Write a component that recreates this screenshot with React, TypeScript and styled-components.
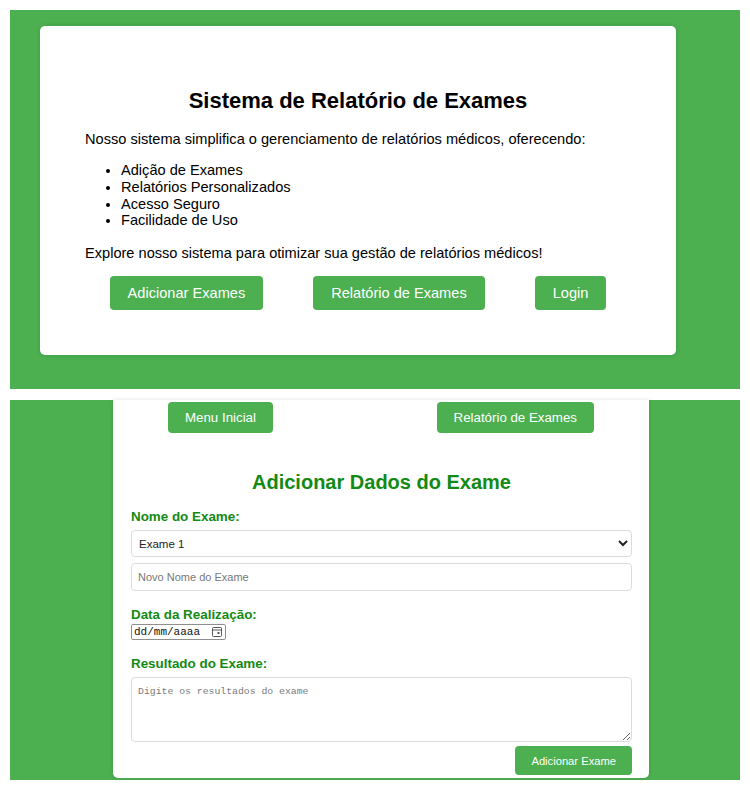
import React from "react";
import styled, { createGlobalStyle } from "styled-components";

const Global = createGlobalStyle`
  html, body { margin: 0; padding: 0; background: #ffffff; }
  body { font-family: "Liberation Sans", Arial, sans-serif; color: #000; }
  * { box-sizing: border-box; }
`;

const Page = styled.div`
  padding: 10px;
  display: flex;
  flex-direction: column;
  gap: 11px;
`;

const GreenSection = styled.section<{ $pad: string }>`
  background: #4caf50;
  padding: ${(p) => p.$pad};
`;

const HomeCard = styled.div`
  background: #ffffff;
  border-radius: 5px;
  box-shadow: 0 0 4px rgba(0, 0, 0, 0.12);
  padding: 62px 45px 45px;
`;

const Title = styled.h1`
  margin: 0 0 17px;
  font-size: 22px;
  font-weight: bold;
  text-align: center;
  line-height: 25px;
`;

const Para = styled.p<{ $mb: number }>`
  margin: 0 0 ${(p) => p.$mb}px;
  font-size: 14.6px;
  line-height: 18px;
`;

const List = styled.ul`
  margin: 0 0 15px;
  padding-left: 36px;
  font-size: 14.6px;
  line-height: 16.75px;
`;

const HomeButtons = styled.div`
  display: flex;
  justify-content: center;
  gap: 50px;
`;

const GreenButton = styled.button<{ $size: number; $pad: string; $h: number }>`
  background: #4caf50;
  color: #ffffff;
  border: none;
  border-radius: 4px;
  font-family: "Liberation Sans", Arial, sans-serif;
  font-size: ${(p) => p.$size}px;
  height: ${(p) => p.$h}px;
  padding: ${(p) => p.$pad};
  cursor: pointer;
  line-height: normal;
`;

const FormCard = styled.div`
  background: #ffffff;
  border-radius: 0 0 5px 5px;
  box-shadow: 0 0 4px rgba(0, 0, 0, 0.12);
  padding: 2px 17px 3px 18px;
`;

const Nav = styled.nav`
  display: flex;
  justify-content: space-between;
  padding: 0 38px 0 37px;
`;

const FormTitle = styled.h2`
  margin: 37px 0 15px;
  font-size: 20px;
  line-height: 24px;
  color: #138a13;
  text-align: center;
`;

const Label = styled.label<{ $mt: number }>`
  display: block;
  margin-top: ${(p) => p.$mt}px;
  font-size: 13.4px;
  line-height: 16px;
  font-weight: bold;
  color: #138a13;
`;

const Select = styled.select`
  display: block;
  width: 100%;
  height: 27px;
  margin-top: 5px;
  padding: 0 3px;
  border: 1px solid #dcdcdc;
  border-radius: 4px;
  background: #ffffff;
  font-family: "Liberation Sans", Arial, sans-serif;
  font-size: 11.5px;
  color: #222;
`;

const TextInput = styled.input`
  display: block;
  width: 100%;
  height: 28px;
  margin-top: 6px;
  padding: 0 6px;
  border: 1px solid #dcdcdc;
  border-radius: 4px;
  font-family: "Liberation Sans", Arial, sans-serif;
  font-size: 11px;
  &::placeholder { color: #777; }
`;

const DateBox = styled.div`
  display: flex;
  width: fit-content;
  align-items: center;
  gap: 12px;
  margin-top: 1px;
  height: 16px;
  padding: 0 3px 0 2px;
  border: 1px solid #8f8f8f;
  border-radius: 2px;
  font-family: "Liberation Mono", "DejaVu Sans Mono", monospace;
  font-size: 11px;
  color: #111;
`;

const TextArea = styled.textarea`
  display: block;
  width: 100%;
  height: 65px;
  margin-top: 5px;
  padding: 8px 6px;
  border: 1px solid #dcdcdc;
  border-radius: 4px;
  font-family: "Liberation Mono", "DejaVu Sans Mono", monospace;
  font-size: 9.8px;
  &::placeholder { color: #7a7a7a; }
`;

const SubmitRow = styled.div`
  display: flex;
  justify-content: flex-end;
  margin-top: 4px;
`;

const CalendarIcon = () => (
  <svg width="10" height="10" viewBox="0 0 10 10" fill="none">
    <rect x="0.5" y="0.5" width="9" height="9" rx="1" stroke="#555" />
    <line x1="0.5" y1="3" x2="9.5" y2="3" stroke="#555" />
    <rect x="5.5" y="5" width="2" height="2" fill="#555" />
  </svg>
);

export default function App() {
  return (
    <>
      <Global />
      <Page>
        <GreenSection $pad="16px 64px 34px 30px">
          <HomeCard>
            <Title>Sistema de Relatório de Exames</Title>
            <Para $mb={14}>
              Nosso sistema simplifica o gerenciamento de relatórios médicos, oferecendo:
            </Para>
            <List>
              <li>Adição de Exames</li>
              <li>Relatórios Personalizados</li>
              <li>Acesso Seguro</li>
              <li>Facilidade de Uso</li>
            </List>
            <Para $mb={14}>
              Explore nosso sistema para otimizar sua gestão de relatórios médicos!
            </Para>
            <HomeButtons>
              <GreenButton $size={14.6} $h={34} $pad="0 18px">Adicionar Exames</GreenButton>
              <GreenButton $size={14.6} $h={34} $pad="0 18px">Relatório de Exames</GreenButton>
              <GreenButton $size={14.6} $h={34} $pad="0 18px">Login</GreenButton>
            </HomeButtons>
          </HomeCard>
        </GreenSection>
        <GreenSection $pad="0 91px 2px 103px">
          <FormCard>
            <Nav>
              <GreenButton $size={13.3} $h={31} $pad="0 17px">Menu Inicial</GreenButton>
              <GreenButton $size={13.3} $h={31} $pad="0 17px">Relatório de Exames</GreenButton>
            </Nav>
            <FormTitle>Adicionar Dados do Exame</FormTitle>
            <Label $mt={0}>Nome do Exame:</Label>
            <Select defaultValue="Exame 1">
              <option>Exame 1</option>
              <option>Exame 2</option>
            </Select>
            <TextInput placeholder="Novo Nome do Exame" />
            <Label $mt={16}>Data da Realização:</Label>
            <DateBox>
              <span>dd/mm/aaaa</span>
              <CalendarIcon />
            </DateBox>
            <Label $mt={16}>Resultado do Exame:</Label>
            <TextArea placeholder="Digite os resultados do exame" />
            <SubmitRow>
              <GreenButton $size={11.2} $h={29} $pad="0 16px">Adicionar Exame</GreenButton>
            </SubmitRow>
          </FormCard>
        </GreenSection>
      </Page>
    </>
  );
}
